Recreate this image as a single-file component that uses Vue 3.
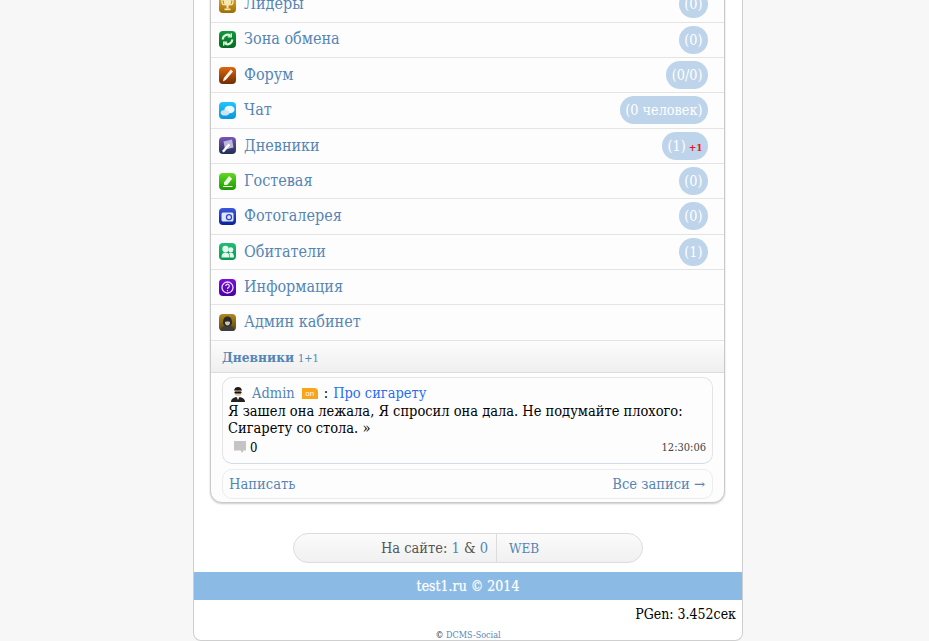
<script setup>
const rows = [
  { name: 'Лидеры', count: '(0)', icon: 'leaders' },
  { name: 'Зона обмена', count: '(0)', icon: 'exchange' },
  { name: 'Форум', count: '(0/0)', icon: 'forum' },
  { name: 'Чат', count: '(0 человек)', icon: 'chat' },
  { name: 'Дневники', count: '(1)', plus: '+1', icon: 'diary' },
  { name: 'Гостевая', count: '(0)', icon: 'guest' },
  { name: 'Фотогалерея', count: '(0)', icon: 'photo' },
  { name: 'Обитатели', count: '(1)', icon: 'users' },
  { name: 'Информация', icon: 'info' },
  { name: 'Админ кабинет', icon: 'admin' }
]
</script>

<template>
  <div class="page">
    <div class="wrap">
      <div class="card">
        <div v-for="row in rows" :key="row.name" class="row">
          <span class="ico" :class="`ico-${row.icon}`">
            <svg viewBox="0 0 17 17" width="17" height="17">
              <g v-if="row.icon === 'leaders'">
                <path d="M3 4h11v2c0 2-1.500 3-3 3M3 4v2c0 2 1.500 3 3 3" fill="none" stroke="#f6e6b0" stroke-width="1.200" />
                <path d="M5 2.500h7v4c0 2-1.500 3.500-3.500 3.500S5 8.500 5 6.500z" fill="#f6e6b0" />
                <rect x="7.500" y="10" width="2" height="2.500" fill="#f6e6b0" />
                <rect x="5.500" y="12.500" width="6" height="1.700" fill="#f6e6b0" />
              </g>
              <g v-else-if="row.icon === 'exchange'" fill="none" stroke="#dff5df" stroke-width="2.200">
                <path d="M3.800 8.500a4.700 4.700 0 0 1 7.600-3.700" />
                <path d="M13.200 8.500a4.700 4.700 0 0 1-7.600 3.700" />
                <path d="M12.300 2.300v3.600H8.800M4.700 14.700v-3.600h3.500" stroke-width="1.300" />
              </g>
              <path v-else-if="row.icon === 'forum'" d="M4 14.500l.8-3.500L11.800 2.500 14 4.500 7 12.800z" fill="#fff4ea" />
              <g v-else-if="row.icon === 'chat'">
                <ellipse cx="10.500" cy="7.500" rx="5" ry="3.800" fill="#eef8ff" />
                <ellipse cx="6" cy="10.800" rx="4.300" ry="2.800" fill="#cfe4f2" />
              </g>
              <g v-else-if="row.icon === 'diary'">
                <path d="M4.500 4.500l8.500-2 1.500 8-8.500 2z" fill="#bdb6dc" />
                <path d="M3 14l6.500-7.500 1.800 1.500-6.500 7.500z" fill="#fff" />
              </g>
              <g v-else-if="row.icon === 'guest'" fill="#eefbe0">
                <path d="M5 9.500L10 3l3.200 2.700-5 6.300H5z" />
                <rect x="4" y="13" width="9.500" height="1" />
              </g>
              <g v-else-if="row.icon === 'photo'">
                <rect x="2.500" y="4.500" width="12" height="9" rx="1.500" fill="#dfe5fb" />
                <circle cx="10" cy="9.200" r="2.500" fill="none" stroke="#2f49c8" stroke-width="1.300" />
              </g>
              <g v-else-if="row.icon === 'users'" fill="#e6f7ee">
                <circle cx="6.500" cy="6" r="3.200" />
                <path d="M2.500 14.500c0-3.500 1.500-5 4-5s4 1.500 4 5z" />
                <circle cx="11.800" cy="6.800" r="2.500" />
                <path d="M11 14.500c0-2-.4-3.500-1-4.500.5-.3 1-.5 1.700-.5 2 0 3.300 1.500 3.300 5z" />
              </g>
              <g v-else-if="row.icon === 'info'">
                <circle cx="8.500" cy="8.500" r="5.500" fill="none" stroke="#eadcff" stroke-width="1.300" />
                <path d="M6.700 7a1.800 1.800 0 1 1 2.700 1.600c-.6.400-.9.700-.9 1.400" fill="none" stroke="#eadcff" stroke-width="1.200" />
                <rect x="7.900" y="11" width="1.200" height="1.200" fill="#eadcff" />
              </g>
              <g v-else>
                <path d="M1.500 17c0-3.500 2.500-5.500 7-5.500s7 2 7 5.500z" fill="#3e3e3c" />
                <path d="M4 9c0-4.500 1.800-6.500 4.500-6.500S13 4.500 13 9c0 2-2 3.500-4.500 3.500S4 11 4 9z" fill="#2b2a28" />
                <path d="M6 8c1.500-.6 3.500-.6 5 0 .2 2-1 3.500-2.500 3.500S5.800 10 6 8z" fill="#cfc6b0" />
              </g>
            </svg>
          </span>
          <a class="row-name">{{ row.name }}</a>
          <span v-if="row.count" class="count">{{ row.count }}<b v-if="row.plus" class="plus">{{ row.plus }}</b></span>
        </div>

        <div class="head"><b>Дневники</b> <span>1+1</span></div>

        <div class="post">
          <div class="post-title">
            <svg class="ava" viewBox="0 0 16 16" width="16" height="16">
              <path d="M1 16c0-3.500 3-5 7-5s7 1.500 7 5z" fill="#222" />
              <path d="M6.500 11h3L8 14z" fill="#eee" />
              <circle cx="8" cy="6.500" r="3.500" fill="#e8c8a0" />
              <path d="M4 4.500C4.500 2 6 1 8 1s3.500 1 4 3.500z" fill="#1a1a1a" />
              <rect x="4.500" y="5.500" width="7" height="2" rx="1" fill="#111" />
            </svg>
            <a class="author">Admin</a>
            <span class="on">on</span>
            <span class="colon">:</span>
            <a class="title">Про сигарету</a>
          </div>
          <div class="post-text">Я зашел она лежала, Я спросил она дала. Не подумайте плохого: Сигарету со стола. »</div>
          <div class="post-foot">
            <span class="comments">
              <svg viewBox="0 0 14 14" width="14" height="14">
                <path d="M1 1h12v9.500h-2.500L9 13 7.500 10.500H1z" fill="#c4c4c4" />
              </svg>
              0
            </span>
            <span class="time">12:30:06</span>
          </div>
        </div>

        <div class="links">
          <a>Написать</a>
          <a>Все записи →</a>
        </div>
      </div>

      <div class="online">
        <div class="online-l">На сайте: <a>1</a> &amp; <a>0</a></div>
        <div class="online-r"><a>WEB</a></div>
      </div>

      <div class="foot">test1.ru © 2014</div>
      <div class="pgen">PGen: 3.452сек</div>
      <div class="copy">© <a>DCMS-Social</a></div>
    </div>
  </div>
</template>

<style>
html, body {
  margin: 0;
  height: 100%;
  overflow: hidden;
  background: #f7f7f7;
}
</style>

<style scoped>
.page {
  height: 641px;
  overflow: hidden;
  font-family: "DejaVu Serif Condensed", "DejaVu Serif", "Liberation Serif", serif;
  font-stretch: condensed;
  color: #000;
}

.wrap {
  box-sizing: border-box;
  width: 550px;
  height: 641px;
  margin-left: 193px;
  background: #fff;
  border: 1px solid #cfcfcf;
  border-top: 0;
  border-radius: 0 0 8px 8px;
  overflow: hidden;
}

.card {
  box-sizing: border-box;
  width: 515px;
  height: 517px;
  margin: -13.87px 0 0 16px;
  background: #fdfdfd;
  border: 1px solid #c9c9c9;
  border-radius: 0 0 12px 12px;
  box-shadow: 0 1px 2px rgba(0, 0, 0, 0.2);
}

.row {
  box-sizing: border-box;
  height: 35.36px;
  display: flex;
  align-items: center;
  padding: 0 16px 0 8px;
  border-bottom: 1px solid #e4e4e4;
}

.ico {
  width: 17px;
  height: 17px;
  border-radius: 4px;
  overflow: hidden;
  flex: none;
  margin-right: 8px;
}

.ico svg {
  display: block;
}

.ico-leaders { background: linear-gradient(#e8b02c, #9c6c08); }
.ico-exchange { background: linear-gradient(#0f9a3a, #056a22); }
.ico-forum { background: linear-gradient(#e0660c, #6e2c04); }
.ico-chat { background: linear-gradient(#22c4fa, #0896e0); }
.ico-diary { background: linear-gradient(#7a54b8, #1c3050); }
.ico-guest { background: linear-gradient(#62d820, #1c9a04); }
.ico-photo { background: linear-gradient(#3a58dc, #0a2296); }
.ico-users { background: linear-gradient(#22bc78, #069a50); }
.ico-info { background: linear-gradient(#7a10d8, #4a00a0); }
.ico-admin { background: linear-gradient(#b08a20, #5a4410); }

.row-name {
  margin-bottom: 1.5px;
  font-size: 16px;
  color: #5585b5;
}

.count {
  margin-left: auto;
  height: 28px;
  line-height: 28px;
  padding: 0 5.5px;
  border-radius: 14px;
  background: #bed4ea;
  color: #fff;
  font-size: 14.3px;
}

.plus {
  margin-left: 3px;
  color: #e8141c;
  font-size: 10px;
}

.head {
  box-sizing: border-box;
  height: 32px;
  line-height: 32px;
  padding-left: 11px;
  background: linear-gradient(#fcfcfc, #efefef);
  border-bottom: 1px solid #dcdcdc;
  font-size: 13.6px;
  color: #5585b5;
}

.head span {
  font-size: 11px;
}

.post {
  box-sizing: border-box;
  width: 491px;
  height: 87px;
  margin: 4px 0 0 11px;
  padding: 5px 5px 0;
  background: #fdfdfd;
  border: 1px solid #e4e4e4;
  border-bottom-color: #d4dce8;
  border-radius: 10px;
  font-size: 14.5px;
  line-height: 17px;
}

.post-title {
  display: flex;
  align-items: center;
  height: 20px;
  padding-top: 1px;
  margin-bottom: -1px;
}

.ava {
  margin: 0 6px 0 2px;
}

.author {
  color: #5585b5;
}

.on {
  margin-left: 7px;
  width: 16px;
  height: 11px;
  line-height: 11px;
  border-radius: 0 4px 0 0;
  background: #f9a51a;
  color: #fff;
  font-size: 8px;
  text-align: center;
  font-family: "Liberation Sans", sans-serif;
}

.colon {
  margin: 0 5px 0 6px;
}

.title {
  color: #2a6df0;
}

.post-foot {
  display: flex;
  justify-content: space-between;
  align-items: center;
  margin-top: 2px;
  padding-right: 1px;
}

.comments {
  display: flex;
  align-items: center;
  gap: 3px;
  margin-left: 5px;
  font-size: 13px;
}

.time {
  font-size: 11px;
  color: #444;
}

.links {
  box-sizing: border-box;
  width: 491px;
  height: 30px;
  margin: 5px 0 0 11px;
  padding: 0 7px 0 6px;
  display: flex;
  justify-content: space-between;
  align-items: center;
  border: 1px solid #ececec;
  border-radius: 10px;
  font-size: 14.6px;
  color: #5585b5;
}

.online {
  box-sizing: border-box;
  width: 350px;
  height: 30px;
  margin: 30px 0 0 99px;
  display: flex;
  line-height: 28px;
  border: 1px solid #dcdcdc;
  border-radius: 15px;
  background: linear-gradient(#fbfbfb, #f0f0f0);
  font-size: 14.5px;
  color: #555;
}

.online a {
  color: #5585b5;
}

.online-l {
  width: 203px;
  padding-right: 8px;
  box-sizing: border-box;
  text-align: right;
  border-right: 1px solid #dcdcdc;
}

.online-r {
  padding-left: 12px;
  font-size: 13.5px;
}

.foot {
  height: 28px;
  line-height: 28px;
  margin-top: 9px;
  background: #8bbbe5;
  color: #fff;
  text-align: center;
  font-size: 14px;
  text-shadow: 0 0 1px rgba(255, 255, 255, 0.6);
}

.pgen {
  margin-top: 5px;
  padding-right: 6px;
  text-align: right;
  font-size: 14px;
  line-height: 18px;
}

.copy {
  margin-top: 6px;
  text-align: center;
  font-size: 9px;
  line-height: 12px;
  color: #333;
}

.copy a {
  color: #5585b5;
}
</style>
